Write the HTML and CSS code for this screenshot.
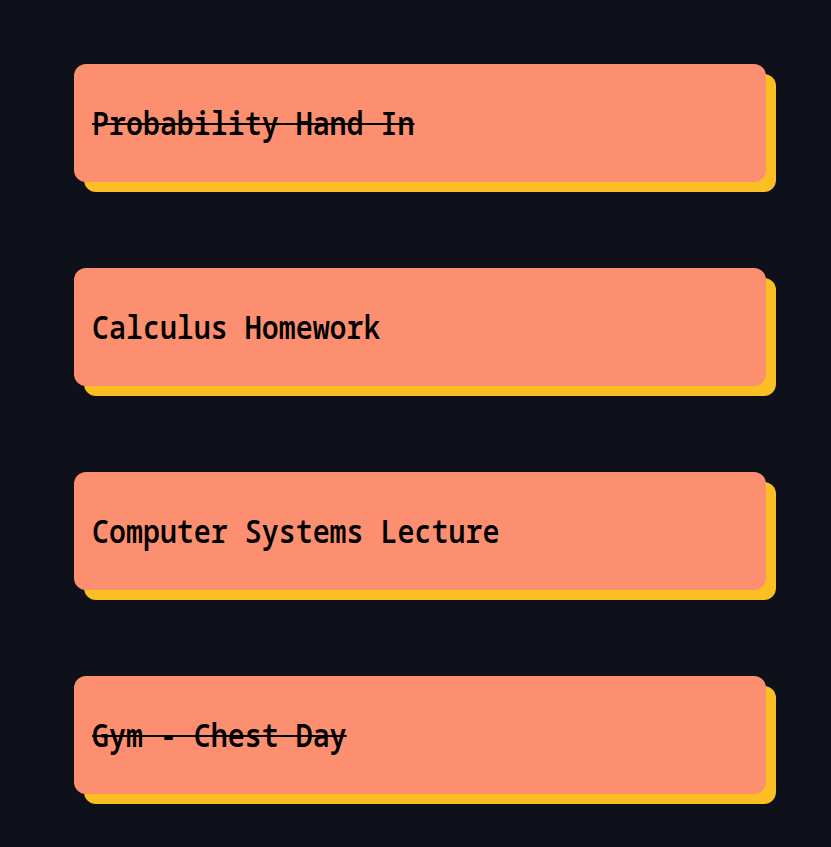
FILE: index.html
```html
<!DOCTYPE html>
<html>
<head>
<meta charset="utf-8">
<link rel="stylesheet" href="styles.css">
</head>
<body>
<main class="list">
  <div class="card"><span class="title done">Probability Hand In</span></div>
  <div class="card"><span class="title">Calculus Homework</span></div>
  <div class="card"><span class="title">Computer Systems Lecture</span></div>
  <div class="card"><span class="title done">Gym - Chest Day</span></div>
</main>
</body>
</html>
```
FILE: styles.css
```css
html, body {
  margin: 0;
  padding: 0;
  background: #0f111a;
  height: 100%;
}
.list {
  display: flex;
  flex-direction: column;
  gap: 86px;
  padding: 64px 65px 0 74px;
}
.card {
  height: 118px;
  box-sizing: border-box;
  background: #fc8f6f;
  border-radius: 12px;
  box-shadow: 10px 10px 0 #fbbf24;
  display: flex;
  align-items: center;
  padding: 0 18px 2px;
}
.title {
  display: inline-block;
  font-family: "Noto Sans Mono", "DejaVu Sans Mono", monospace;
  font-weight: 600;
  font-size: 32px;
  color: #000;
  white-space: nowrap;
  transform: scaleX(0.884);
  transform-origin: left center;
}
.done {
  text-decoration: line-through;
  text-decoration-thickness: 2px;
}
```
